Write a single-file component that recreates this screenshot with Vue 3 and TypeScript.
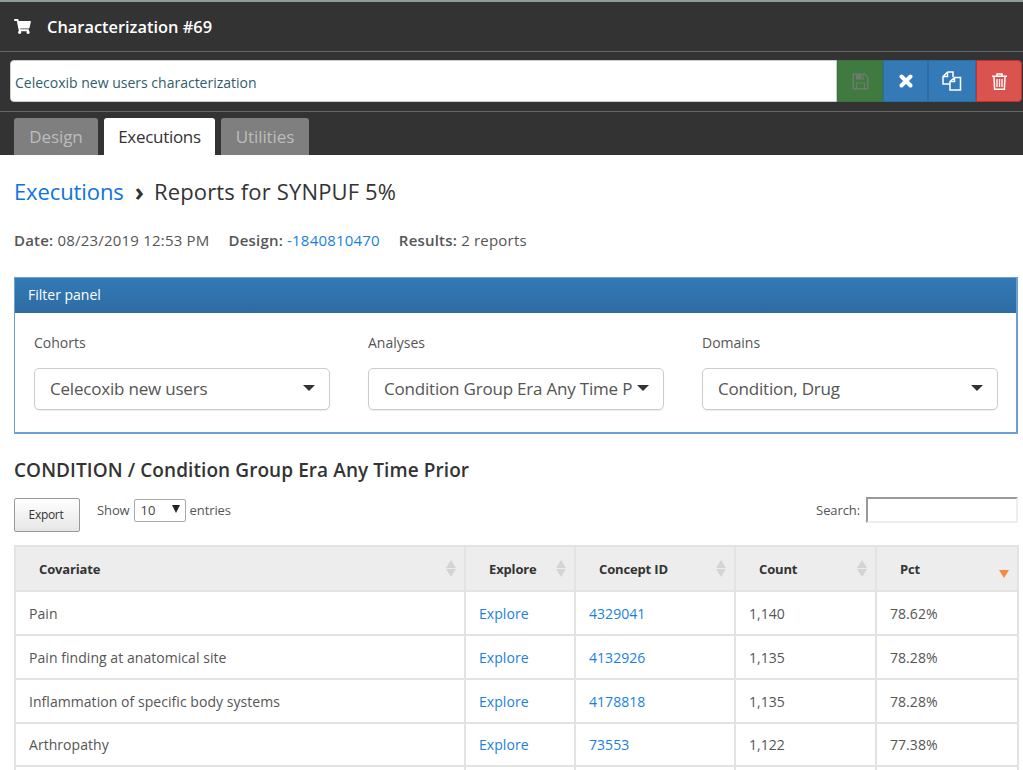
<script setup lang="ts">
interface Row { name: string; id: string; count: string; pct: string }
const rows: Row[] = [
  { name: 'Pain', id: '4329041', count: '1,140', pct: '78.62%' },
  { name: 'Pain finding at anatomical site', id: '4132926', count: '1,135', pct: '78.28%' },
  { name: 'Inflammation of specific body systems', id: '4178818', count: '1,135', pct: '78.28%' },
  { name: 'Arthropathy', id: '73553', count: '1,122', pct: '77.38%' },
]
const cols = ['Covariate', 'Explore', 'Concept ID', 'Count']
const filters = [
  { label: 'Cohorts', value: 'Celecoxib new users' },
  { label: 'Analyses', value: 'Condition Group Era Any Time P' },
  { label: 'Domains', value: 'Condition, Drug' },
]
</script>

<template>
  <div class="page">
    <header class="top">
      <div class="title-row">
        <svg class="cart" viewBox="0 0 576 512" aria-hidden="true"><path fill="#fff" d="M528 301.3l47.3-208C578.7 78.3 567.3 64 552 64H159.2l-9.2-44.8C147.8 8 137.9 0 126.5 0H24C10.7 0 0 10.7 0 24v16c0 13.3 10.7 24 24 24h69.9l70.2 343.4C147.3 417.1 136 435.2 136 456c0 30.900 25.100 56 56 56s56-25.100 56-56c0-15.700-6.400-29.800-16.800-40h209.600C430.400 426.200 424 440.300 424 456c0 30.900 25.100 56 56 56s56-25.100 56-56c0-22.200-12.900-41.300-31.600-50.400l5.500-24.300c3.400-15-8-29.300-23.400-29.300H218.100l-6.500-32h293c11.200 0 20.900-7.800 23.400-18.700z"/></svg>
        <h1>Characterization #69</h1>
      </div>
      <div class="name-row">
        <div class="name-input">Celecoxib new users characterization</div>
        <button class="btn save" aria-label="Save">
          <svg width="17" height="17" viewBox="0 0 17 17"><path fill="none" stroke="#6d7a6d" stroke-width="1.6" d="M1.300 1.300h11.400l3 3v11.400H1.300z"/><path fill="#6d7a6d" d="M4 1h8v5.500H4zM4 9.500h9V16H4z"/><path fill="#3f7a40" d="M9.500 2h1.700v3.500H9.500zM5 10.500h7V15H5z"/></svg>
        </button>
        <button class="btn blue" aria-label="Close">
          <svg width="14" height="14" viewBox="0 0 14 14"><path stroke="#fff" stroke-width="4" stroke-linecap="round" d="M2.500 2.500l9 9M11.500 2.500l-9 9"/></svg>
        </button>
        <button class="btn blue copy" aria-label="Copy">
          <svg width="20" height="20" viewBox="0 0 20 20"><path fill="none" stroke="#fff" stroke-width="1.500" d="M5.500 1H11v5M5.500 1L1 5.500V13h6.500M5.500 1v4.500H1M12.500 6.500L8 10.500V19H18.500V6.500zM12.500 6.500v4H8"/></svg>
        </button>
        <button class="btn red" aria-label="Delete">
          <svg width="15" height="17" viewBox="0 0 15 17"><path fill="none" stroke="#fff" stroke-width="1.500" d="M0 3.300h15M5 3V1h5v2M2 3.500l.6 12.700h9.800L13 3.500"/><path stroke="#fff" stroke-width="1.300" d="M5 6v8M7.500 6v8M10 6v8"/></svg>
        </button>
      </div>
      <nav class="tabs">
        <span class="tab t1">Design</span>
        <span class="tab t2 active">Executions</span>
        <span class="tab t3">Utilities</span>
      </nav>
    </header>

    <main class="content">
      <h2 class="crumbs"><a class="crumb-link">Executions</a><span class="chev">›</span><span class="crumb-here">Reports for SYNPUF 5%</span></h2>
      <div class="meta">
        <span><b>Date:</b> 08/23/2019 12:53 PM</span>
        <span><b>Design:</b> <a>-1840810470</a></span>
        <span><b>Results:</b> 2 reports</span>
      </div>

      <section class="panel">
        <div class="panel-head">Filter panel</div>
        <div class="panel-body">
          <div v-for="f in filters" :key="f.label" class="filter">
            <label>{{ f.label }}</label>
            <div class="select"><span class="sel-text">{{ f.value }}</span><i class="caret"></i></div>
          </div>
        </div>
      </section>

      <h3 class="sub">CONDITION / Condition Group Era Any Time Prior</h3>

      <div class="tools">
        <button class="export">Export</button>
        <div class="show">Show <span class="len">10<i class="len-arrow"></i></span> entries</div>
        <div class="search">Search: <span class="search-box"></span></div>
      </div>

      <table>
        <colgroup>
          <col class="c1"><col class="c2"><col class="c3"><col class="c4"><col class="c5">
        </colgroup>
        <thead>
          <tr>
            <th v-for="c in cols" :key="c">{{ c }}<span class="sort"><i class="up"></i><i class="down"></i></span></th>
            <th>Pct<i class="sorted"></i></th>
          </tr>
        </thead>
        <tbody>
          <tr v-for="r in rows" :key="r.id">
            <td>{{ r.name }}</td>
            <td><a>Explore</a></td>
            <td><a>{{ r.id }}</a></td>
            <td>{{ r.count }}</td>
            <td>{{ r.pct }}</td>
          </tr>
          <tr class="spill"><td></td><td></td><td></td><td></td><td></td></tr>
        </tbody>
      </table>
    </main>
  </div>
</template>

<style>
html, body { margin: 0; height: 100%; overflow: hidden; background: #fff; }
</style>

<style scoped>
.page { width: 1023px; height: 770px; overflow: hidden; font-family: "Open Sans", "Noto Sans", sans-serif; color: #333; font-size: 14px; }
a { color: #1a7fe0; text-decoration: none; }
.top { background: #333; border-top: 2px solid #8f9a9a; height: 155px; box-sizing: border-box; display: flex; flex-direction: column; }
.title-row { height: 50px; box-sizing: border-box; display: flex; align-items: center; padding-left: 14px; border-bottom: 1px solid #666; flex: none; }
.cart { width: 17px; height: 15px; margin-right: 16px; }
h1 { margin: 0; font-size: 16.400px; font-weight: 600; color: #fff; }
.name-row { height: 60px; box-sizing: border-box; display: flex; align-items: flex-start; padding: 8px 1px 0 10px; border-bottom: 1px solid #666; flex: none; }
.name-input { flex: 1; height: 42px; box-sizing: border-box; background: #fff; border: 1px solid #ccc; border-radius: 4px 0 0 4px; display: flex; align-items: center; padding: 2px 0 0 4px; color: #305d6e; }
.btn { height: 42px; border: 1px solid transparent; padding: 0; display: flex; align-items: center; justify-content: center; box-sizing: border-box; flex: none; }
.save { width: 46px; background: #3f7a40; border-color: #3a733b; }
.blue { width: 45px; background: #337ab7; border-color: #2e6da4; }
.copy { width: 48px; }
.red { width: 46px; background: #d9534f; border-color: #c9302c; border-radius: 0 4px 4px 0; }
.tabs { display: flex; gap: 6px; padding: 6px 0 0 14px; flex: 1; align-items: flex-end; }
.tab { height: 37px; box-sizing: border-box; background: #7f7f7f; color: #bdbdbd; border-radius: 3px 3px 0 0; display: flex; align-items: center; justify-content: center; font-size: 17px; letter-spacing: -0.1px; }
.t1 { width: 84px; }
.t2 { width: 111px; letter-spacing: -0.3px; }
.t3 { width: 88px; }
.active { background: #fff; color: #333; }
.content { padding: 0 5px 0 14px; }
.crumbs { margin: 0; padding-top: 18px; height: 53px; box-sizing: border-box; display: flex; align-items: center; font-size: 22px; font-weight: 400; line-height: 30px; }
.crumb-link { color: #0b74de; letter-spacing: -0.1px; }
.crumb-here { letter-spacing: 0.15px; margin-left: 1px; }
.chev { margin: 0 9px 0 11px; font-weight: 700; color: #333; font-size: 25px; line-height: 26px; }
.meta { margin-top: 20px; height: 24px; display: flex; gap: 19px; align-items: center; color: #555; font-size: 15px; letter-spacing: 0.2px; }
.meta b { font-weight: 600; }
.panel { margin-top: 25px; height: 157px; box-sizing: border-box; border: 1px solid #6d9fd0; border-width: 1px 2px 2px 1px; }
.panel-head { height: 35px; box-sizing: border-box; padding: 0 0 2px 13px; background: linear-gradient(#337ab7, #2d6ca2); color: #fff; display: flex; align-items: center; font-size: 14px; }
.panel-body { display: grid; grid-template-columns: repeat(3, 296px); column-gap: 38px; padding: 20px 0 0 19px; }
.filter label { display: block; font-size: 14px; color: #555; line-height: 19px; }
.select { margin-top: 16px; width: 100%; height: 42px; box-sizing: border-box; border: 1px solid #ccc; border-radius: 5px; display: flex; align-items: center; padding: 0 14px 2px 15px; box-shadow: 0 1px 1px rgba(0,0,0,.08); font-size: 17px; color: #555; letter-spacing: -0.2px; }
.sel-text { flex: 1; white-space: nowrap; min-width: 0; }
.caret { border: 6px solid transparent; border-top: 6px solid #333; border-bottom: 0; margin-left: 4px; flex: none; }
.sub { margin: 24px 0 0; font-size: 19px; font-weight: 600; line-height: 24px; color: #333; letter-spacing: 0.08px; }
.tools { margin-top: 14px; height: 49px; display: flex; align-items: flex-start; position: relative; font-size: 13px; color: #555; letter-spacing: -0.1px; }
.export { width: 66px; height: 34px; box-sizing: border-box; border: 1px solid #999; border-radius: 2px; background: linear-gradient(#fff, #e6e6e6); font: inherit; font-size: 12px; color: #333; padding: 0 2px 2px 0; margin-top: 2px; letter-spacing: -0.3px; }
.show { margin-left: 17px; margin-top: 2px; display: flex; align-items: center; gap: 4px; height: 24px; }
.len { width: 52px; height: 23px; box-sizing: border-box; border: 1px solid #aaa; border-radius: 2px; display: flex; align-items: center; justify-content: space-between; padding: 0 5px 0 6px; color: #444; }
.len-arrow { border: 4.500px solid transparent; border-top: 8px solid #222; border-bottom: 0; margin-bottom: 3px; }
.search { margin-left: auto; display: flex; align-items: center; gap: 6px; height: 27px; margin-top: 0; }
.search-box { width: 152px; height: 26px; box-sizing: border-box; border: 2px solid #eee; border-top-color: #999; border-left-color: #999; display: block; }
table { width: 1003px; table-layout: fixed; border-collapse: collapse; font-size: 14px; color: #555; letter-spacing: 0.05px; }
.c1 { width: 450px; } .c2 { width: 110px; } .c3 { width: 160px; } .c4 { width: 141px; } .c5 { width: 142px; }
th, td { border: 2px solid #e3e3e3; text-align: left; box-sizing: border-box; }
th { height: 45px; background: #ededed; padding: 0 23px; font-size: 13px; font-weight: 700; color: #333; position: relative; letter-spacing: -0.15px; }
td { height: 44px; padding: 0 13px; }
tbody tr:nth-child(4) td { height: 43px; }
.sort { position: absolute; right: 8px; top: 13px; display: flex; flex-direction: column; gap: 1px; }
.sort i { display: block; border: 5px solid transparent; }
.sort .up { border-top: 0; border-bottom: 8px solid #d4d4d4; }
.sort .down { border-bottom: 0; border-top: 8px solid #d4d4d4; }
.sorted { position: absolute; right: 8px; top: 23px; border: 5px solid transparent; border-bottom: 0; border-top: 8px solid #f58b3c; }
</style>
